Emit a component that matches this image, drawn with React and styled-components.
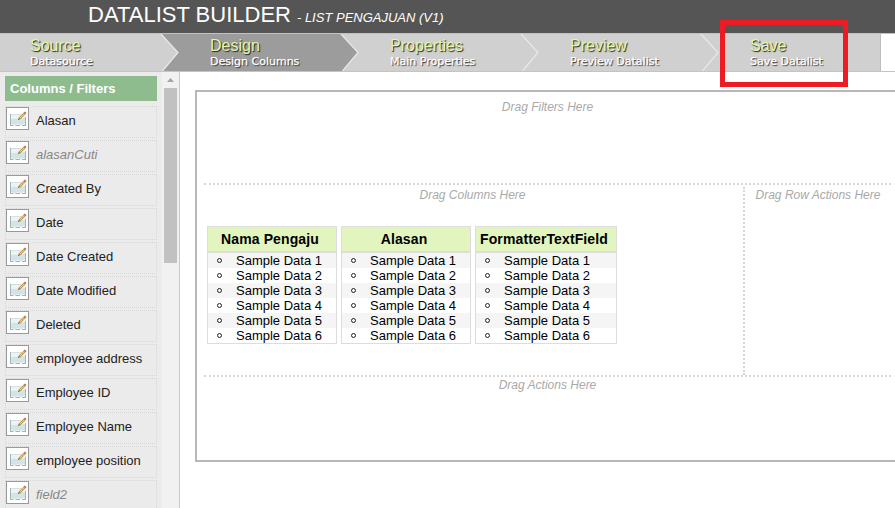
import React from "react";
import styled, { createGlobalStyle } from "styled-components";

const Global = createGlobalStyle`
  *, *::before { box-sizing: border-box; }
  html, body { margin: 0; height: 100%; overflow: hidden; background: #fff; }
  body { font-family: "Liberation Sans", Arial, sans-serif; font-size: 13px; color: #000; }
`;

const Page = styled.div`
  position: relative;
  display: flex;
  flex-direction: column;
  width: 895px;
  height: 508px;
  overflow: hidden;
  white-space: nowrap;
`;

const Header = styled.header`
  flex: none;
  height: 33px;
  padding-left: 88px;
  background: #555;
  color: #fff;
  line-height: 30px;
`;

const Title = styled.span`
  font-size: 22px;
`;

const Subtitle = styled.em`
  font-size: 13px;
  margin-left: 6px;
`;

const Steps = styled.nav`
  flex: none;
  display: flex;
  height: 39px;
  border-top: 1px solid #c1c1c1;
  border-bottom: 1px solid #c4c4c4;
`;

const StepBox = styled.div`
  flex: none;
  display: flex;
  justify-content: space-between;
  width: ${(p) => (p.$last ? 161 : 180)}px;
  padding-left: 30px;
  background: ${(p) => (p.$active ? "#9c9c9c" : "#d0d0d0")};
  border-right: ${(p) => (p.$last ? "1px solid #bdbdbd" : "none")};
`;

const StepText = styled.div`
  padding-top: 3px;
  text-shadow: 1px 1px 1px #222;
`;

const StepName = styled.div`
  color: #e3f7a9;
  font-size: 16px;
  line-height: 17px;
`;

const StepNote = styled.div`
  color: #fff;
  font: 11px/16px "DejaVu Sans", Verdana, sans-serif;
  -webkit-text-stroke: 0.25px #fff;
`;

const Arrow = styled.svg`
  flex: none;
  display: block;
  width: 20px;
  height: 37px;
`;

const Body = styled.div`
  flex: 1;
  display: flex;
  min-height: 0;
`;

const Sidebar = styled.aside`
  flex: none;
  display: flex;
  justify-content: space-between;
  width: 180px;
  background: #ebebeb;
  border-right: 1px solid #ccc;
  overflow: hidden;
`;

const Palette = styled.div`
  display: flex;
  flex-direction: column;
  width: 157px;
  padding: 4px 0 0 5px;
`;

const PaletteTitle = styled.div`
  flex: none;
  height: 25px;
  margin-bottom: 5px;
  padding-left: 5px;
  background: #8fbc8f;
  color: #fff;
  font-weight: bold;
  line-height: 25px;
`;

const Field = styled.div`
  flex: none;
  display: flex;
  height: 32px;
  margin-bottom: 2px;
  border: 1px dotted #d8d8d8;
  color: ${(p) => (p.$muted ? "#888" : "#222")};
  font-style: ${(p) => (p.$muted ? "italic" : "normal")};
  line-height: 27px;
`;

const FieldIcon = styled.svg`
  flex: none;
  display: block;
  width: 23px;
  height: 23px;
  margin-right: 7px;
`;

const Scrollbar = styled.div`
  display: flex;
  flex-direction: column;
  align-items: center;
  width: 17px;
  background: #f1f1f1;
`;

const ScrollUp = styled.svg`
  display: block;
  width: 17px;
  height: 16px;
`;

const Thumb = styled.div`
  width: 13px;
  height: 175px;
  background: #c1c1c1;
`;

const Workspace = styled.main`
  flex: none;
  width: 730px;
  padding: 18px 0 0 15px;
`;

const Builder = styled.div`
  height: 372px;
  padding: 7px 0 0 7px;
  border: 2px solid #b8b8b8;
`;

const Zone = styled.section`
  width: ${(p) => p.$width}px;
  height: ${(p) => p.$height}px;
`;

const FilterZone = styled(Zone)`
  border-bottom: 2px dotted #d6d6d6;
`;

const Middle = styled.div`
  display: flex;
  width: 687px;
  height: 192px;
  padding-top: 2px;
  border-bottom: 2px dotted #d6d6d6;
`;

const ColumnZone = styled(Zone)`
  padding-right: 2px;
`;

const RowActionZone = styled(Zone)`
  border-left: 2px dotted #d6d6d6;
`;

const Hint = styled.div`
  padding-top: 1px;
  color: #a9a9a9;
  font-size: 12px;
  font-style: italic;
  line-height: 14px;
  text-align: center;
`;

const Columns = styled.div`
  display: flex;
  gap: 4px;
  padding: 24px 0 0 3px;
`;

const Column = styled.div`
  flex: none;
  width: ${(p) => p.$width}px;
  border: 1px solid #ddd;
`;

const ColumnHead = styled.div`
  height: 26px;
  padding-right: 4px;
  background: #e3f5bf;
  border-bottom: 2px solid #ddd;
  font-size: 14px;
  font-weight: bold;
  letter-spacing: 0.12px;
  line-height: 25px;
  text-align: center;
`;

const Samples = styled.ul`
  margin: 0;
  padding: 0;
  list-style: none;
`;

const Sample = styled.li`
  display: flex;
  align-items: center;
  gap: 14px;
  height: 15px;
  padding-left: 9px;
  line-height: 15px;
  &:nth-child(odd) { background: #f5f5f5; }
  &::before {
    content: "";
    width: 5px;
    height: 5px;
    border: 1px solid #222;
    border-radius: 50%;
  }
`;

const Highlight = styled.div`
  position: absolute;
  left: 720px;
  top: 20px;
  width: 128px;
  height: 67px;
  border: 5px solid #ed1c24;
`;

const steps = [
  { name: "Source", note: "Datasource", left: "#d0d0d0", right: "#9c9c9c" },
  { name: "Design", note: "Design Columns", active: true, left: "#9c9c9c", right: "#d0d0d0" },
  { name: "Properties", note: "Main Properties", left: "#d0d0d0", right: "#d0d0d0" },
  { name: "Preview", note: "Preview Datalist", left: "#d0d0d0", right: "#d0d0d0" },
  { name: "Save", note: "Save Datalist", last: true },
];

const fields = [
  ["Alasan"], ["alasanCuti", true], ["Created By"], ["Date"], ["Date Created"],
  ["Date Modified"], ["Deleted"], ["employee address"], ["Employee ID"],
  ["Employee Name"], ["employee position"], ["field2", true],
];

const columns = [["Nama Pengaju", 130], ["Alasan", 130], ["FormatterTextField", 142]];

const Step = ({ name, note, active, last, left, right }) => (
  <StepBox $active={active} $last={last}>
    <StepText>
      <StepName>{name}</StepName>
      <StepNote>{note}</StepNote>
    </StepText>
    {!last && (
      <Arrow viewBox="0 0 20 37">
        <rect width="20" height="37" fill={right} />
        <path d="M0 0H1L18 18.5L2.5 37H0Z" fill={left} />
        <path d="M1 0L18 18.5L2.5 37" fill="none" stroke="#e9e9e9" strokeWidth="1.2" />
      </Arrow>
    )}
  </StepBox>
);

const EditIcon = () => (
  <FieldIcon viewBox="0 0 23 23">
    <rect x=".5" y=".5" width="22" height="22" fill="#fff" stroke="#999" />
    <path d="M4 7H20V18L17 17L15 19L13 17.500L10 19L8 17.500L4 18.500Z" fill="#edf4f4" />
    <path d="M5 12L20 11V18L17 17L15 18L12 17L9 18L5 17Z" fill="#d3e3e6" />
    <path d="M4.500 7V19M19.500 10V19M4 18.500H7.500M9.500 18.500H14M16 18.500H20" stroke="#a5b4b6" fill="none" />
    <path d="M5 7.500H15" stroke="#d5dfdf" />
    <path d="M13 12L19.500 5.500" stroke="#a47335" strokeWidth="2.400" />
    <path d="M13.500 11.500L18.500 6.500" stroke="#f7cf7c" strokeWidth="1.100" />
    <path d="M12 13L13.500 11.500" stroke="#77736b" />
    <path d="M18.500 5L20 6.500" stroke="#b98066" strokeWidth="1.200" />
  </FieldIcon>
);

export default function App() {
  return (
    <Page>
      <Global />
      <Header>
        <Title>DATALIST BUILDER</Title>
        <Subtitle>- LIST PENGAJUAN (V1)</Subtitle>
      </Header>
      <Steps>
        {steps.map((s) => <Step key={s.name} {...s} />)}
      </Steps>
      <Body>
        <Sidebar>
          <Palette>
            <PaletteTitle>Columns / Filters</PaletteTitle>
            {fields.map(([name, muted]) => (
              <Field key={name} $muted={muted}><EditIcon />{name}</Field>
            ))}
          </Palette>
          <Scrollbar>
            <ScrollUp viewBox="0 0 17 16"><path d="M5 10L8.500 6L12 10Z" fill="#a3a3a3" /></ScrollUp>
            <Thumb />
          </Scrollbar>
        </Sidebar>
        <Workspace>
          <Builder>
            <FilterZone $width={687} $height={86}>
              <Hint>Drag Filters Here</Hint>
            </FilterZone>
            <Middle>
              <ColumnZone $width={539} $height={188}>
                <Hint>Drag Columns Here</Hint>
                <Columns>
                  {columns.map(([name, width]) => (
                    <Column key={name} $width={width}>
                      <ColumnHead>{name}</ColumnHead>
                      <Samples>
                        {[1, 2, 3, 4, 5, 6].map((n) => <Sample key={n}>Sample Data {n}</Sample>)}
                      </Samples>
                    </Column>
                  ))}
                </Columns>
              </ColumnZone>
              <RowActionZone $width={148} $height={188}>
                <Hint>Drag Row Actions Here</Hint>
              </RowActionZone>
            </Middle>
            <Zone $width={687} $height={80}>
              <Hint>Drag Actions Here</Hint>
            </Zone>
          </Builder>
        </Workspace>
      </Body>
      <Highlight />
    </Page>
  );
}
